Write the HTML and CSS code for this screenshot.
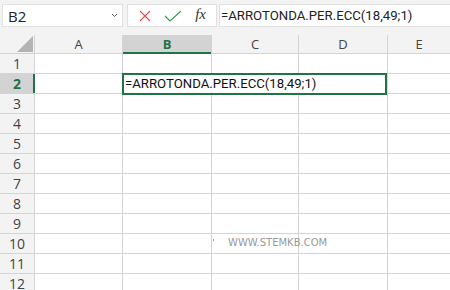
FILE: index.html
```html
<!DOCTYPE html>
<html lang="it">
<head>
    <meta charset="UTF-8">
    <title>Excel - ARROTONDA.PER.ECC</title>
    <link rel="stylesheet" href="styles.css">
</head>
<body>
    <div class="toolbar">
        <div class="name-box">
            <span>B2</span>
            <svg class="chevron" width="7" height="5" viewBox="0 0 7 5"><path d="M1 1 L3.5 3.5 L6 1" fill="none" stroke="#555" stroke-width="1"/></svg>
        </div>
        <div class="buttons">
            <svg width="12" height="12" viewBox="0 0 12 12"><path d="M1 1 L11 11 M11 1 L1 11" stroke="#e74c4c" stroke-width="1.1"/></svg>
            <svg width="18" height="12" viewBox="0 0 18 12"><path d="M1 6 L6 11 L17 1" fill="none" stroke="#2e9e4f" stroke-width="1.1"/></svg>
            <span class="fx">fx</span>
        </div>
        <div class="formula">=ARROTONDA.PER.ECC(18,49;1)</div>
    </div>
    <div class="sheet">
        <div class="corner"><div class="triangle"></div></div>
        <div class="col-head">A</div>
        <div class="col-head active">B</div>
        <div class="col-head">C</div>
        <div class="col-head">D</div>
        <div class="col-head">E</div>
    </div>
    <script>
        // build the 12 rows of the grid
        let sheet = document.querySelector('.sheet');
        for (let r = 1; r <= 12; r++) {
            let head = document.createElement('div');
            head.className = r == 2 ? 'row-head active' : 'row-head';
            head.textContent = r;
            sheet.appendChild(head);
            for (let c = 0; c < 5; c++) {
                let cell = document.createElement('div');
                cell.className = 'cell';
                if (r == 2 && c == 1) {
                    cell.innerHTML = '<div class="editor">=ARROTONDA.PER.ECC(18,49;1)</div>';
                }
                if (r == 10 && c == 2) {
                    cell.innerHTML = '<span class="tick"></span><span class="watermark">WWW.STEMKB.COM</span>';
                }
                sheet.appendChild(cell);
            }
        }
    </script>
</body>
</html>
```

FILE: styles.css
```css
body, html {
    margin: 0;
    padding: 0;
    background: #f3f3f3;
    font-family: 'Open Sans', sans-serif;
    color: #444;
    overflow: hidden;
}
.toolbar {
    display: flex;
    align-items: center;
    height: 35px;
    padding: 0 0 0 2px;
    box-sizing: border-box;
}
.name-box, .buttons, .formula {
    background: #fff;
    border: 1px solid #e1e1e1;
    height: 23px;
    box-sizing: border-box;
    display: flex;
    align-items: center;
    margin-top: -4px;
}
.name-box {
    width: 121px;
    padding: 0 4px 0 5px;
    justify-content: space-between;
    font-size: 15px;
    color: #222;
}
.buttons {
    width: 90px;
    margin-left: 4px;
    padding: 0 10px 0 11px;
    justify-content: space-between;
}
.fx {
    font-family: 'Liberation Serif', serif;
    font-style: italic;
    font-size: 15px;
    color: #333;
    margin-top: -2px;
}
.formula {
    flex: 1;
    margin-left: 2px;
    padding-left: 1px;
    font-family: Roboto, sans-serif;
    font-size: 13.2px;
    color: #222;
    border-right: none;
}
.sheet {
    display: grid;
    grid-template-columns: 34px 87px 88px 86px 88px 1fr;
    grid-template-rows: 18px;
    grid-auto-rows: 19px;
    gap: 1px;
    background: #d4d4d4;
}
.corner {
    background: #f3f3f3;
    position: relative;
}
.triangle {
    position: absolute;
    right: 1px;
    bottom: 1px;
    width: 0;
    height: 0;
    border-left: 16px solid transparent;
    border-bottom: 16px solid #b4b4b4;
}
.col-head, .row-head {
    background: #f3f3f3;
    font-size: 13px;
    display: flex;
    align-items: center;
    justify-content: center;
    color: #444;
}
.row-head {
    font-size: 14px;
}
.col-head.active {
    background: #d3d3d3;
    color: #217346;
    font-weight: bold;
    box-shadow: 0 1px #217346, inset 0 -1px #217346;
}
.row-head.active {
    background: #d3d3d3;
    color: #217346;
    font-weight: bold;
    box-shadow: 1px 0 #217346, inset -1px 0 #217346;
}
.cell {
    background: #fff;
    position: relative;
}
.editor {
    position: absolute;
    left: -1px;
    top: -1px;
    width: 265px;
    height: 22px;
    border: 2px solid #217346;
    box-sizing: border-box;
    background: #fff;
    font-family: Roboto, sans-serif;
    font-size: 13.2px;
    color: #111;
    padding-left: 1px;
    line-height: 18px;
    z-index: 2;
}
.tick {
    position: absolute;
    left: 1px;
    top: 5px;
    width: 1px;
    height: 2px;
    background: #d9a05a;
}
.watermark {
    position: absolute;
    left: 16px;
    top: 3px;
    font-family: 'DejaVu Sans', sans-serif;
    font-size: 10px;
    color: #9a9a9a;
    white-space: nowrap;
    z-index: 3;
}
```
